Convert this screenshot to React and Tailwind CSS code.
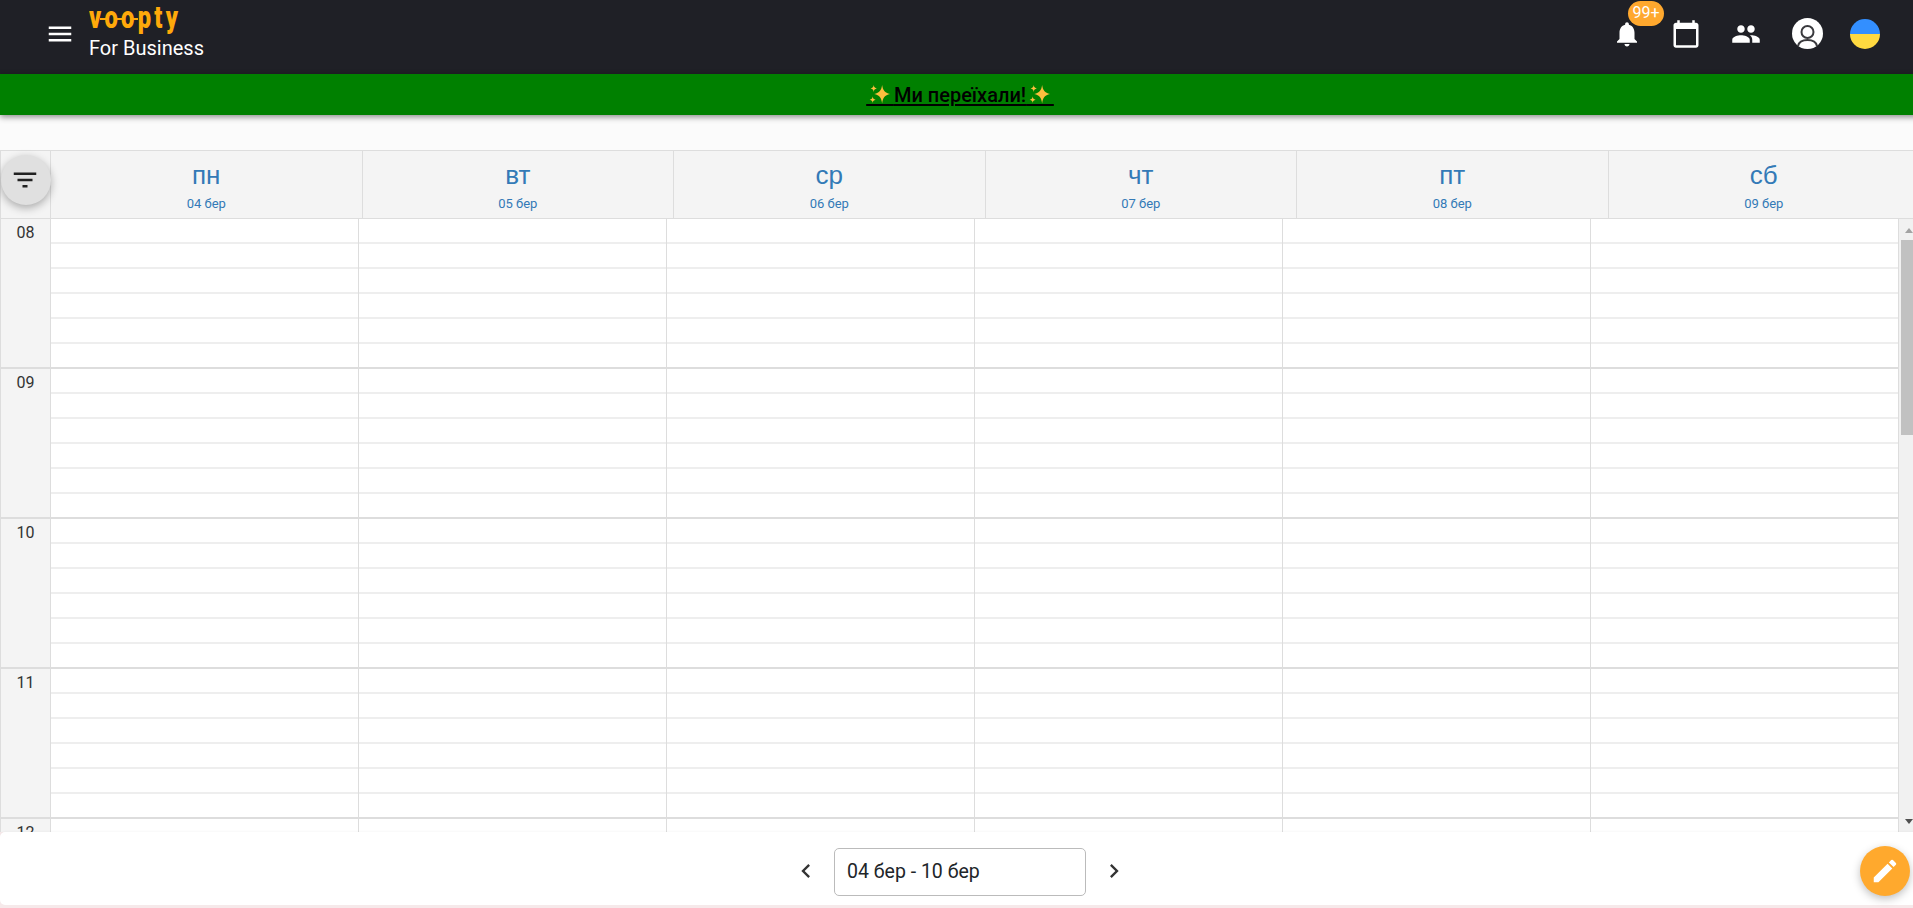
const DAYS = [
  ['пн', '04 бер'],
  ['вт', '05 бер'],
  ['ср', '06 бер'],
  ['чт', '07 бер'],
  ['пт', '08 бер'],
  ['сб', '09 бер'],
];
const HOURS = ['08', '09', '10', '11', '12'];

const Icon = ({ d, className = '' }) => (
  <svg viewBox="0 0 24 24" fill="currentColor" className={className}>
    <path d={d} />
  </svg>
);

const Sparkles = () => (
  <svg viewBox="0 0 20 20" className="absolute left-[3px] top-[1px] w-[21px] h-[21px]" fill="#fdbe3e">
    <path d="M12.5 1c.7 5 2.400 7.300 7.500 8.500-5.100 1.200-6.800 3.500-7.500 9-.7-5.500-2.400-7.800-7.500-9 5.100-1.200 6.800-3.500 7.500-8.500z" />
    <path d="M4.500 1c.3 2.100 1 2.800 3 3.300-2 .5-2.700 1.200-3 3.300-.3-2.100-1-2.800-3-3.300 2-.5 2.700-1.200 3-3.300z" />
    <path d="M3.500 12c.3 1.900 1 2.600 2.800 3-1.800.4-2.500 1.100-2.800 3-.3-1.900-1-2.600-2.800-3 1.800-.4 2.500-1.100 2.800-3z" />
  </svg>
);

function Logo() {
  return (
    <div className="relative h-[28px] w-[100px]">
      <span className="absolute left-0 top-[-10px] origin-left scale-x-[0.74] font-['Roboto'] text-[32px] leading-[38px] font-black tracking-[4.5px] text-[#ffa90a]">
        voopty
      </span>
      <span className="absolute left-[11px] top-[10px] h-[2px] w-[6px] bg-[#ffa90a]" />
      <span className="absolute left-[27px] top-[10px] h-[2px] w-[6px] bg-[#ffa90a]" />
      <span className="absolute left-[43px] top-[10px] h-[2px] w-[6px] bg-[#ffa90a]" />
    </div>
  );
}

function AccountIcon() {
  return (
    <svg viewBox="0 0 31 31" className="w-[31px] h-[31px] mr-[27px]" fill="none" stroke="#3a3a3e" strokeWidth="2">
      <circle cx="15.5" cy="15.5" r="15.5" fill="#fff" stroke="none" />
      <circle cx="15.5" cy="14" r="6" />
      <path d="M6 28c.8-3.800 4.800-6 9.500-6s8.700 2.200 9.500 6" />
    </svg>
  );
}

function Header() {
  return (
    <header className="h-[74px] shrink-0 bg-[#1f2026] flex items-center pl-[45px] pr-[40px] pb-[7px] text-white">
      <Icon className="w-[30px] h-[30px] mr-[14px]" d="M3 18h18v-2H3v2zm0-5h18v-2H3v2zm0-7v2h18V6H3z" />
      <div className="flex flex-col self-start pt-[8px]">
        <Logo />
        <span className="font-['Roboto'] text-[20px] leading-[23px] mt-[1px]">For Business</span>
      </div>
      <div className="ml-auto flex items-center">
        <div className="relative mr-[29px]">
          <Icon className="w-[30px] h-[30px]" d="M12 22c1.100 0 2-.9 2-2h-4c0 1.100.89 2 2 2zm6-6v-5c0-3.070-1.640-5.640-4.500-6.320V4c0-.83-.67-1.500-1.500-1.500s-1.500.67-1.500 1.500v.68C7.630 5.360 6 7.920 6 11v5l-2 2v1h16v-1l-2-2z" />
          <span className="absolute left-[16px] top-[-18px] h-[25px] w-[36px] rounded-full bg-[#ffa82e] flex items-center justify-center font-['Roboto'] text-[16px]">
            99+
          </span>
        </div>
        <Icon className="w-[30px] h-[30px] mr-[30px]" d="M20 3h-1V1h-2v2H7V1H5v2H4c-1.100 0-2 .9-2 2v16c0 1.100.9 2 2 2h16c1.100 0 2-.9 2-2V5c0-1.100-.9-2-2-2zm0 18H4V8h16v13z" />
        <Icon className="w-[30px] h-[30px] mr-[31px]" d="M16 11c1.660 0 2.990-1.340 2.990-3S17.660 5 16 5c-1.660 0-3 1.340-3 3s1.340 3 3 3zm-8 0c1.660 0 2.990-1.340 2.990-3S9.660 5 8 5C6.340 5 5 6.340 5 8s1.340 3 3 3zm0 2c-2.330 0-7 1.170-7 3.500V19h14v-2.500c0-2.330-4.670-3.500-7-3.500zm8 0c-.29 0-.62.02-.97.05 1.160.84 1.970 1.970 1.970 3.450V19h6v-2.500c0-2.330-4.670-3.500-7-3.500z" />
        <AccountIcon />
        <div className="w-[30px] h-[30px] rounded-full overflow-hidden flex flex-col">
          <div className="h-[15px] bg-[#338fff]" />
          <div className="h-[15px] bg-[#ffd940]" />
        </div>
      </div>
    </header>
  );
}

function Banner() {
  return (
    <div className="relative z-10 h-[41px] shrink-0 bg-[#008000] flex items-center justify-center shadow-[0_2px_6px_rgba(0,0,0,0.45)]">
      <a className="font-['Roboto'] text-[20px] leading-[26px] font-medium text-black underline decoration-2 underline-offset-2 whitespace-pre">
        <span className="relative tracking-[-0.35px]">{'\u00a0\u00a0\u00a0\u00a0\u00a0\u00a0'}<Sparkles /></span>
        Ми переїхали!
        <span className="relative tracking-[-0.35px]">{'\u00a0\u00a0\u00a0\u00a0\u00a0\u00a0'}<Sparkles /></span>
      </a>
    </div>
  );
}

function DayHeader() {
  return (
    <div className="relative h-[69px] shrink-0 flex border-t border-b border-[#ddd] bg-[#f4f4f4]">
      <div className="w-[51px] shrink-0 border-l border-r border-[#ddd]" />
      {DAYS.map(([name, date]) => (
        <div key={name} className="w-[311.5px] shrink-0 border-r border-[#ddd] flex flex-col items-center pt-[10px] text-[#337ab7]">
          <span className="font-['Liberation_Sans'] text-[26px] leading-[28px]">{name}</span>
          <span className="font-['Roboto'] text-[13px] leading-[16px] mt-[7px]">{date}</span>
        </div>
      ))}
      <button className="absolute left-[1px] top-[4px] w-[50px] h-[50px] rounded-full bg-[#e0e0e0] flex items-center justify-center text-[#212121] shadow-[0_3px_8px_rgba(0,0,0,0.3)]">
        <Icon className="w-[30px] h-[30px] mr-[3px]" d="M10 18h4v-2h-4v2zM3 6v2h18V6H3zm3 7h12v-2H6v2z" />
      </button>
    </div>
  );
}

function HourBlock({ hour }) {
  return (
    <div className="flex h-[150px] shrink-0">
      <div className="w-[51px] shrink-0 bg-[#f4f4f4] border-l border-r border-b-2 border-[#ddd] text-center font-['Roboto'] text-[16px] leading-[24px] pt-[2px] text-[#333]">
        {hour}
      </div>
      {DAYS.map(([name]) => (
        <div key={name} className="w-[308px] shrink-0 flex flex-col border-r border-[#ddd]">
          <div className="h-[25px] border-b-2 border-[#eee]" />
          <div className="h-[25px] border-b-2 border-[#eee]" />
          <div className="h-[25px] border-b-2 border-[#eee]" />
          <div className="h-[25px] border-b-2 border-[#eee]" />
          <div className="h-[25px] border-b-2 border-[#eee]" />
          <div className="h-[25px] border-b-2 border-[#ddd]" />
        </div>
      ))}
    </div>
  );
}

function Scrollbar() {
  return (
    <div className="relative w-[21px] shrink-0 bg-[#f1f1f1] pl-[2px] pt-[21px]">
      <div className="h-[195px] bg-[#c1c1c1]" />
      <div className="absolute left-[6px] top-[9px] w-0 h-0 border-x-4 border-x-transparent border-b-[5px] border-b-[#a3a3a3]" />
      <div className="absolute left-[6px] top-[600px] w-0 h-0 border-x-4 border-x-transparent border-t-[5px] border-t-[#505050]" />
    </div>
  );
}

function Footer() {
  return (
    <div className="relative z-10 h-[73px] shrink-0 bg-white rounded-[5px] shadow-[0_-1px_2px_rgba(0,0,0,0.03)] flex items-start justify-center pt-[16px] text-[#333]">
      <Icon className="w-[28px] h-[28px] mt-[9px]" d="M15.410 7.410L14 6l-6 6 6 6 1.410-1.410L10.830 12z" />
      <div className="mx-[14px] w-[252px] h-[48px] border border-[#bbb] rounded-[5px] flex items-center pl-[12px] font-['Roboto'] text-[19.5px] text-[#212529]">
        04 бер - 10 бер
      </div>
      <Icon className="w-[28px] h-[28px] mt-[9px]" d="M10 6L8.590 7.410 13.170 12l-4.580 4.590L10 18l6-6z" />
      <button className="absolute right-[10px] top-[14px] w-[50px] h-[50px] rounded-full bg-[#ffa92d] flex items-center justify-center text-white shadow-[0_3px_8px_rgba(0,0,0,0.25)]">
        <Icon className="w-[30px] h-[30px]" d="M3 17.250V21h3.750L17.810 9.940l-3.750-3.750L3 17.250zM20.710 7.040c.39-.39.39-1.020 0-1.410l-2.340-2.340a.9959.9959 0 0 0-1.410 0l-1.830 1.830 3.750 3.750 1.830-1.830z" />
      </button>
    </div>
  );
}

export default function App() {
  return (
    <div className="w-[1913px] h-[908px] overflow-hidden">
      <div className="w-[1920px] h-[908px] flex flex-col bg-[#f6e9ea]">
        <Header />
        <Banner />
        <div className="h-[35px] shrink-0 bg-[#fbfbfb]" />
        <DayHeader />
        <div className="flex-1 min-h-0 flex overflow-hidden bg-white">
          <div className="flex-1 flex flex-col min-w-0">
            {HOURS.map((h) => (
              <HourBlock key={h} hour={h} />
            ))}
          </div>
          <Scrollbar />
        </div>
        <Footer />
        <div className="h-[3px] shrink-0" />
      </div>
    </div>
  );
}
